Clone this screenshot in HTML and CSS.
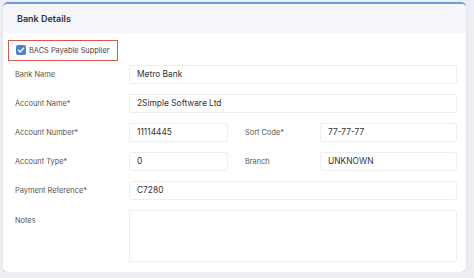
FILE: index.html
```html
<!DOCTYPE html>
<html lang="en">
<head>
    <meta charset="UTF-8">
    <title>Bank Details</title>
    <link rel="stylesheet" href="styles.css">
</head>
<body>
    <div class="card">
        <div class="card-header">Bank Details</div>
        <div class="card-body">
            <label class="bacs-check">
                <span class="checkbox">
                    <svg width="8" height="8" viewBox="0 0 8 8"><path d="M1.5 4.2 L3.3 5.9 L6.6 2.2" fill="none" stroke="#fff" stroke-width="1.4" stroke-linecap="round" stroke-linejoin="round"/></svg>
                </span>
                BACS Payable Supplier
            </label>

            <div class="form-grid">
                <div class="label">Bank Name</div>
                <div class="field wide">Metro Bank</div>

                <div class="label">Account Name*</div>
                <div class="field wide">2Simple Software Ltd</div>

                <div class="label">Account Number*</div>
                <div class="field">11114445</div>
                <div class="label second">Sort Code*</div>
                <div class="field">77-77-77</div>

                <div class="label">Account Type*</div>
                <div class="field">0</div>
                <div class="label second">Branch</div>
                <div class="field">UNKNOWN</div>

                <div class="label">Payment Reference*</div>
                <div class="field wide">C7280</div>

                <div class="label notes-label">Notes</div>
                <div class="field wide notes"></div>
            </div>
        </div>
    </div>
</body>
</html>
```

FILE: styles.css
```css
body {
    font-family: 'Inter', sans-serif;
    background-color: #eceef3;
    margin: 0;
    padding: 2px 8px 0 3px;
}
.card {
    background-color: #fff;
    border-top: 2px solid #6f9bdc;
    border-radius: 5px;
    box-shadow: 0 1px 2px rgba(0, 0, 0, 0.12);
    height: 270px;
    box-sizing: border-box;
    overflow: hidden;
}
.card-header {
    background-color: #f4f6fa;
    color: #2f3338;
    font-size: 9px;
    font-weight: 600;
    height: 29px;
    line-height: 29px;
    padding-left: 14px;
}
.card-body {
    padding: 5px 9px 0 12px;
}
.bacs-check {
    display: inline-flex;
    align-items: center;
    gap: 3px;
    height: 21px;
    padding: 0 8px 0 7px;
    margin-left: -7px;
    border: 1.5px solid #d9564b;
    box-sizing: border-box;
    font-size: 7.4px;
    color: #444;
}
.checkbox {
    width: 10px;
    height: 10px;
    border-radius: 2px;
    background-color: #4f82c8;
    display: flex;
    align-items: center;
    justify-content: center;
}
.form-grid {
    display: grid;
    grid-template-columns: 114px 99px 92px 1fr;
    grid-auto-rows: 19px;
    row-gap: 10px;
    margin-top: 4px;
    align-items: center;
}
.label {
    font-size: 7.4px;
    color: #555;
}
.label.second {
    padding-left: 17px;
}
.field {
    height: 19px;
    box-sizing: border-box;
    border: 1px solid #eceef1;
    border-radius: 2px;
    padding-left: 7px;
    font-size: 8.4px;
    color: #333;
    line-height: 17px;
}
.field.wide {
    grid-column: span 3;
}
.notes {
    height: 52px;
    align-self: start;
}
.notes-label {
    align-self: start;
    padding-top: 6px;
}
```
